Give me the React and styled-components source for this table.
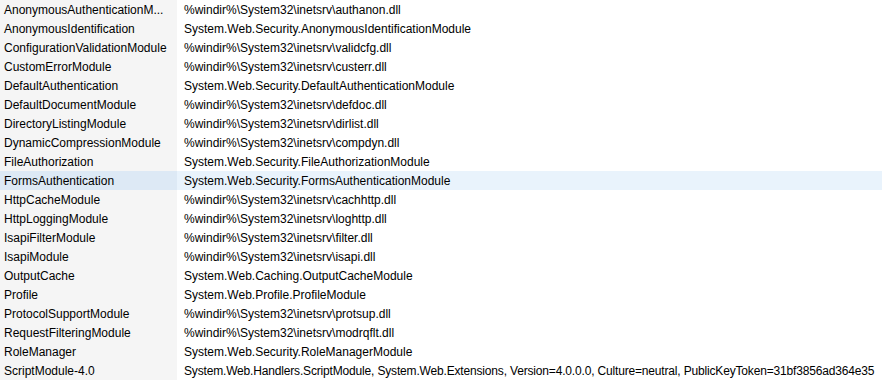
import React from 'react'
import styled, {createGlobalStyle} from 'styled-components'

const GlobalStyle = createGlobalStyle`
    html, body {
        margin: 0;
        padding: 0;
        background: #ffffff;
    }
`

const modules = [
    ['AnonymousAuthenticationM...', '%windir%\\System32\\inetsrv\\authanon.dll'],
    ['AnonymousIdentification', 'System.Web.Security.AnonymousIdentificationModule'],
    ['ConfigurationValidationModule', '%windir%\\System32\\inetsrv\\validcfg.dll'],
    ['CustomErrorModule', '%windir%\\System32\\inetsrv\\custerr.dll'],
    ['DefaultAuthentication', 'System.Web.Security.DefaultAuthenticationModule'],
    ['DefaultDocumentModule', '%windir%\\System32\\inetsrv\\defdoc.dll'],
    ['DirectoryListingModule', '%windir%\\System32\\inetsrv\\dirlist.dll'],
    ['DynamicCompressionModule', '%windir%\\System32\\inetsrv\\compdyn.dll'],
    ['FileAuthorization', 'System.Web.Security.FileAuthorizationModule'],
    ['FormsAuthentication', 'System.Web.Security.FormsAuthenticationModule'],
    ['HttpCacheModule', '%windir%\\System32\\inetsrv\\cachhttp.dll'],
    ['HttpLoggingModule', '%windir%\\System32\\inetsrv\\loghttp.dll'],
    ['IsapiFilterModule', '%windir%\\System32\\inetsrv\\filter.dll'],
    ['IsapiModule', '%windir%\\System32\\inetsrv\\isapi.dll'],
    ['OutputCache', 'System.Web.Caching.OutputCacheModule'],
    ['Profile', 'System.Web.Profile.ProfileModule'],
    ['ProtocolSupportModule', '%windir%\\System32\\inetsrv\\protsup.dll'],
    ['RequestFilteringModule', '%windir%\\System32\\inetsrv\\modrqflt.dll'],
    ['RoleManager', 'System.Web.Security.RoleManagerModule'],
    ['ScriptModule-4.0', 'System.Web.Handlers.ScriptModule, System.Web.Extensions, Version=4.0.0.0, Culture=neutral, PublicKeyToken=31bf3856ad364e35'],
]

const List = styled.div`
    width: 882px;
    height: 383px;
    overflow: hidden;
    font-family: 'Liberation Sans', Arial, sans-serif;
    font-size: 12px;
    color: #000000;
`

const Row = styled.div`
    display: grid;
    grid-template-columns: 177px 1fr;
    height: 19px;
    background: ${p => (p.selected ? '#e9f3fc' : 'transparent')};
`

const NameCell = styled.div`
    box-sizing: border-box;
    height: 19px;
    padding: 1px 0 0 4px;
    line-height: 18px;
    background: ${p => (p.selected ? '#dde9f5' : '#f5f5f5')};
    white-space: nowrap;
    overflow: hidden;
`

const PathCell = styled.div`
    box-sizing: border-box;
    height: 19px;
    padding: 1px 0 0 7px;
    line-height: 18px;
    white-space: nowrap;
    letter-spacing: ${p => (p.long ? '-0.17px' : 'normal')};
`

export default function App() {
    return (
        <>
            <GlobalStyle />
            <List>
                {modules.map(([name, path]) => {
                    const selected = name === 'FormsAuthentication'
                    return (
                        <Row key={name} selected={selected}>
                            <NameCell selected={selected}>{name}</NameCell>
                            <PathCell long={path.length > 90}>{path}</PathCell>
                        </Row>
                    )
                })}
            </List>
        </>
    )
}
